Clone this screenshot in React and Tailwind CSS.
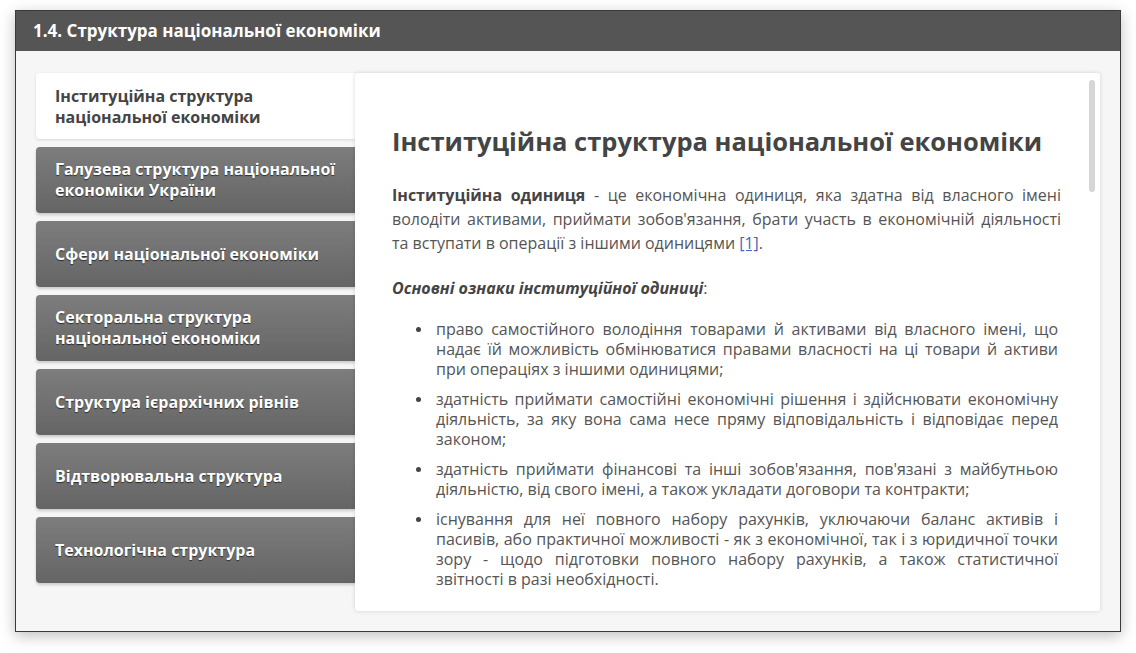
const tabs = [
  "Інституційна структура національної економіки",
  "Галузева структура національної економіки України",
  "Сфери національної економіки",
  "Секторальна структура національної економіки",
  "Структура ієрархічних рівнів",
  "Відтворювальна структура",
  "Технологічна структура",
];

const items = [
  "право самостійного володіння товарами й активами від власного імені, що надає їй можливість обмінюватися правами власності на ці товари й активи при операціях з іншими одиницями;",
  "здатність приймати самостійні економічні рішення і здійснювати економічну діяльність, за яку вона сама несе пряму відповідальність і відповідає перед законом;",
  "здатність приймати фінансові та інші зобов'язання, пов'язані з майбутньою діяльністю, від свого імені, а також укладати договори та контракти;",
  "існування для неї повного набору рахунків, уключаючи баланс активів і пасивів, або практичної можливості - як з економічної, так і з юридичної точки зору - щодо підготовки повного набору рахунків, а також статистичної звітності в разі необхідності.",
];

export default function App() {
  return (
    <div
      className="w-[1136px] h-[653px] bg-white pt-[10px] pl-[15px]"
      style={{ fontFamily: '"Open Sans", "Noto Sans", sans-serif' }}
    >
      <div className="w-[1106px] h-[622px] border border-[#3a3a3a] bg-[#f6f6f6] flex flex-col shadow-[0_4px_14px_rgba(0,0,0,0.25)]">
        <div className="h-[40px] bg-[#555555] flex items-center pl-[17px]">
          <h1 className="text-white font-bold text-[17px]">
            1.4. Структура національної економіки
          </h1>
        </div>
        <div className="flex flex-1 pt-[22px] pl-[20px] pr-[20px] pb-[20px] min-h-0">
          <div className="w-[319px] flex flex-col gap-[8px] shrink-0">
            {tabs.map((t, i) =>
              i === 0 ? (
                <div
                  key={i}
                  className="h-[66px] bg-white rounded-l-[4px] flex items-center pl-[19px] pr-[20px] pt-[1px] text-[16px] leading-[21px] font-bold text-[#444] shadow-[0_1px_3px_rgba(0,0,0,0.12)]"
                >
                  {t}
                </div>
              ) : (
                <div
                  key={i}
                  className="h-[66px] rounded-l-[4px] bg-gradient-to-b from-[#7d7d7d] to-[#656565] flex items-center pl-[19px] pr-[14px] text-[16px] leading-[21px] font-bold text-white [text-shadow:0_1px_1px_rgba(0,0,0,0.6)] shadow-[0_2px_3px_rgba(0,0,0,0.18)]"
                >
                  {t}
                </div>
              )
            )}
          </div>
          <div className="relative flex-1 bg-white rounded-[3px] shadow-[0_0_4px_rgba(0,0,0,0.15)] overflow-hidden pl-[37px] pr-[39px] pt-[51px]">
            <div className="absolute right-[5px] top-[7px] w-[6px] h-[112px] rounded-full bg-[#d6d6d6]" />
            <h2 className="text-[25.5px] font-bold text-[#444] leading-[34px]">
              Інституційна структура національної економіки
            </h2>
            <p className="mt-[25px] text-[16px] leading-[24px] text-[#555] text-justify">
              <b className="text-[#444]">Інституційна одиниця</b> - це економічна одиниця, яка здатна від власного імені володіти активами, приймати зобов'язання, брати участь в економічній діяльності та вступати в операції з іншими одиницями{" "}
              <span className="text-[#4a5fc1] underline">[1]</span>.
            </p>
            <p className="mt-[21px] text-[16px] leading-[24px] text-[#444] font-bold italic">
              Основні ознаки інституційної одиниці<span className="font-normal not-italic text-[#555]">:</span>
            </p>
            <ul className="mt-[19px] pl-[44px] pr-[3px] flex flex-col gap-[10px]">
              {items.map((it, i) => (
                <li
                  key={i}
                  className="relative text-[16px] leading-[20px] text-[#555] text-justify"
                >
                  <span className="absolute left-[-20px] top-[8px] w-[5px] h-[5px] rounded-full bg-[#444]" />
                  {it}
                </li>
              ))}
            </ul>
          </div>
        </div>
      </div>
    </div>
  );
}
